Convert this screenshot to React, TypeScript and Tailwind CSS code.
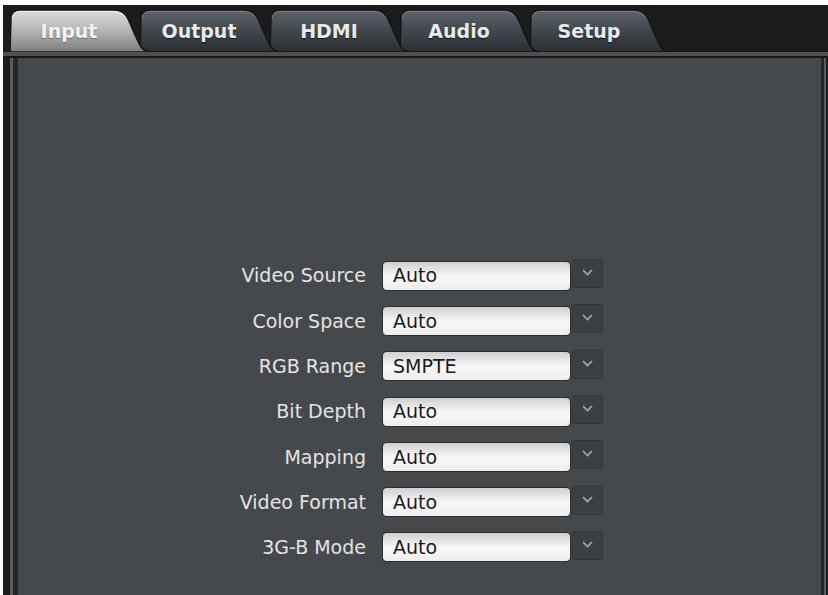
import React from 'react';

// ── Data ──────────────────────────────────────────────────────────────────────

const TABS = ['Input', 'Output', 'HDMI', 'Audio', 'Setup'];

const FIELDS: { label: string; value: string }[] = [
  { label: 'Video Source', value: 'Auto' },
  { label: 'Color Space', value: 'Auto' },
  { label: 'RGB Range', value: 'SMPTE' },
  { label: 'Bit Depth', value: 'Auto' },
  { label: 'Mapping', value: 'Auto' },
  { label: 'Video Format', value: 'Auto' },
  { label: '3G-B Mode', value: 'Auto' },
];

const FONT = { fontFamily: '"DejaVu Sans", "Liberation Sans", sans-serif' };

// ── Tab ───────────────────────────────────────────────────────────────────────

// Tab outline: soft left edge, rounded top-left, flat top, curved slope on the right.
const TAB_PATH =
  'M0,43 L1,9 Q2,1 10,1 L104,1 Q113,1 117,8 C122,18 126,30 131,38 Q134,43 142,43 Z';

function Tab({ label, active, z }: { label: string; active: boolean; z: number }) {
  const gid = active ? 'tab-active' : 'tab-idle';
  return (
    <div
      className="relative h-[43px] w-[142px] shrink-0 first:ml-0 -ml-[12px]"
      style={{ zIndex: active ? 20 : z }}
    >
      <svg width="142" height="43" viewBox="0 0 142 43" className="absolute inset-0">
        <defs>
          <linearGradient id="tab-active" x1="0" y1="0" x2="0" y2="1">
            <stop offset="0" stopColor="#dcdcdc" />
            <stop offset="0.45" stopColor="#b9b9b9" />
            <stop offset="1" stopColor="#7d7d7d" />
          </linearGradient>
          <linearGradient id="tab-idle" x1="0" y1="0" x2="0" y2="1">
            <stop offset="0" stopColor="#5d646b" />
            <stop offset="0.5" stopColor="#41474d" />
            <stop offset="1" stopColor="#2b2f33" />
          </linearGradient>
        </defs>
        <path d={TAB_PATH} fill={`url(#${gid})`} stroke="#141414" strokeWidth="1.5" />
        <path
          d="M2,9 Q3,2.5 10,2.5 L104,2.5 Q111,2.5 115,8"
          fill="none"
          stroke={active ? '#eeeeee' : '#767d84'}
          strokeWidth="1"
        />
      </svg>
      <span
        className={`relative flex h-full w-[118px] items-center justify-center pt-[1px] text-[19px] font-bold ${
          active ? 'text-[#f2f2f2]' : 'text-[#e6eaed]'
        }`}
        style={{ ...FONT, textShadow: active ? '0 1px 1px rgba(0,0,0,0.35)' : '0 1px 1px rgba(0,0,0,0.6)' }}
      >
        {label}
      </span>
    </div>
  );
}

// ── Field row ─────────────────────────────────────────────────────────────────

function Field({ label, value }: { label: string; value: string }) {
  return (
    <div className="flex h-[45.3px] items-center">
      <span className="w-[200px] text-right text-[19px] text-[#e4e4e4]" style={FONT}>
        {label}
      </span>
      <div className="ml-[17px] flex items-center">
        <div
          className="flex h-[28px] w-[187px] items-center rounded-[4px] bg-linear-to-b from-[#cfcfcf] via-[#f7f7f7] to-[#eeeeee] pl-[10px] text-[19px] text-[#1b1b1b] shadow-[0_0_0_1px_#2a2c2e]"
          style={FONT}
        >
          {value}
        </div>
        <div className="ml-[2px] -mt-[4px] flex h-[29px] w-[31px] items-start justify-center rounded-[2px] border border-[#34373a] bg-[#3d4043] pt-[9px]">
          <svg width="11" height="7" viewBox="0 0 11 7">
            <path d="M1,1 L5.5,5.5 L10,1" fill="none" stroke="#a8abad" strokeWidth="1.6" />
          </svg>
        </div>
      </div>
    </div>
  );
}

// ── App ───────────────────────────────────────────────────────────────────────

export default function App() {
  return (
    <div className="h-[595px] w-[828px] overflow-hidden bg-white pl-[3px] pt-[5px]">
      <div className="flex h-[590px] flex-col bg-[#1c1c1c]">
        {/* Tab strip */}
        <div className="flex h-[47px] items-end pl-[7px]">
          {TABS.map((t, i) => (
            <Tab key={t} label={t} active={i === 0} z={10 - i} />
          ))}
        </div>

        {/* Rule under the tabs */}
        <div className="h-[4px] bg-[#4e5052]" />
        <div className="h-[2px] bg-[#161616]" />

        {/* Body with layered frame */}
        <div className="flex flex-1 pl-[7px] pr-[2px]">
          <div className="flex flex-1 border-l-[3px] border-r-[2px] border-[#5b5d5f]">
            <div className="flex flex-1 border-l-[5px] border-r-[3px] border-[#242628] bg-[#46494c]">
              <div className="flex flex-1 flex-col pl-[148px] pt-[195px]">
                {FIELDS.map((f) => (
                  <Field key={f.label} label={f.label} value={f.value} />
                ))}
              </div>
            </div>
          </div>
        </div>
      </div>
    </div>
  );
}
